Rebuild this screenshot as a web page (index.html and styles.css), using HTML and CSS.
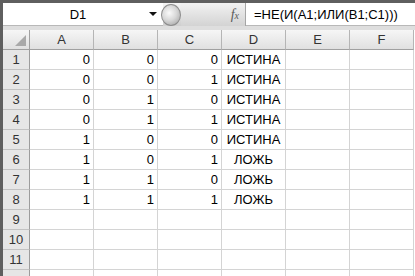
FILE: index.html
```html
<!DOCTYPE html>
<html>
<head>
    <title>Excel - НЕ(И(ИЛИ))</title>
    <link rel="stylesheet" href="styles.css">
</head>
<body>
    <div class="main">
        <div class="formula-bar">
            <div class="name-box">
                <span class="name">D1</span>
                <span class="drop"></span>
            </div>
            <div class="splitter"><span class="knob"></span></div>
            <div class="fx-area"><span class="fx"><i>f</i><small>x</small></span></div>
            <div class="formula">=НЕ(И(А1;ИЛИ(В1;С1)))</div>
        </div>

        <div class="sheet">
            <div class="corner"><span class="tri"></span></div>
            <div class="col-head">A</div>
            <div class="col-head">B</div>
            <div class="col-head">C</div>
            <div class="col-head">D</div>
            <div class="col-head">E</div>
            <div class="col-head">F</div>

            <div class="row-head">1</div><div class="cell num">0</div><div class="cell num">0</div><div class="cell num">0</div><div class="cell bool">ИСТИНА</div><div class="cell"></div><div class="cell"></div>
            <div class="row-head">2</div><div class="cell num">0</div><div class="cell num">0</div><div class="cell num">1</div><div class="cell bool">ИСТИНА</div><div class="cell"></div><div class="cell"></div>
            <div class="row-head">3</div><div class="cell num">0</div><div class="cell num">1</div><div class="cell num">0</div><div class="cell bool">ИСТИНА</div><div class="cell"></div><div class="cell"></div>
            <div class="row-head">4</div><div class="cell num">0</div><div class="cell num">1</div><div class="cell num">1</div><div class="cell bool">ИСТИНА</div><div class="cell"></div><div class="cell"></div>
            <div class="row-head">5</div><div class="cell num">1</div><div class="cell num">0</div><div class="cell num">0</div><div class="cell bool">ИСТИНА</div><div class="cell"></div><div class="cell"></div>
            <div class="row-head">6</div><div class="cell num">1</div><div class="cell num">0</div><div class="cell num">1</div><div class="cell bool">ЛОЖЬ</div><div class="cell"></div><div class="cell"></div>
            <div class="row-head">7</div><div class="cell num">1</div><div class="cell num">1</div><div class="cell num">0</div><div class="cell bool">ЛОЖЬ</div><div class="cell"></div><div class="cell"></div>
            <div class="row-head">8</div><div class="cell num">1</div><div class="cell num">1</div><div class="cell num">1</div><div class="cell bool">ЛОЖЬ</div><div class="cell"></div><div class="cell"></div>
            <div class="row-head">9</div><div class="cell"></div><div class="cell"></div><div class="cell"></div><div class="cell"></div><div class="cell"></div><div class="cell"></div>
            <div class="row-head">10</div><div class="cell"></div><div class="cell"></div><div class="cell"></div><div class="cell"></div><div class="cell"></div><div class="cell"></div>
            <div class="row-head">11</div><div class="cell"></div><div class="cell"></div><div class="cell"></div><div class="cell"></div><div class="cell"></div><div class="cell"></div>
            <div class="row-head"></div><div class="cell"></div><div class="cell"></div><div class="cell"></div><div class="cell"></div><div class="cell"></div><div class="cell"></div>
        </div>
    </div>
</body>
</html>
```

FILE: styles.css
```css
body {
    margin: 0;
    padding: 0;
    background-color: #5f5f5f;
    font-family: "Liberation Sans", Arial, sans-serif;
    font-size: 12px;
    color: #000;
    overflow: hidden;
}

.main {
    margin: 3px 0 0 3px;
    background-color: #dedede;
    height: 273px;
    overflow: hidden;
}

/* formula bar */
.formula-bar {
    display: flex;
    height: 23px;
    margin-bottom: 4px;
}

.name-box {
    width: 160px;
    display: flex;
    align-items: center;
    background-color: #fff;
    border-bottom: 1px solid #b8b8b8;
    box-sizing: border-box;
}

.name {
    flex: 1;
    text-align: center;
    font-size: 13px;
    padding-left: 4px;
}

.drop {
    width: 0;
    height: 0;
    border-left: 4px solid transparent;
    border-right: 4px solid transparent;
    border-top: 4px solid #111;
    margin-right: 6px;
}

.splitter {
    width: 18px;
    background: linear-gradient(#f4f4f4, #cfcfcf);
    display: flex;
    align-items: center;
}

.knob {
    width: 20px;
    height: 22px;
    margin-left: -2px;
    border-radius: 50%;
    background: radial-gradient(circle at 40% 40%, #fafafa 0, #d8d8d8 45%, #9a9a9a 100%);
    border: 1px solid #8c8c8c;
    box-sizing: border-box;
}

.fx-area {
    width: 65px;
    display: flex;
    align-items: center;
    justify-content: flex-end;
    padding-right: 6px;
    box-sizing: border-box;
    background: linear-gradient(#f2f2f2, #d3d3d3);
    border-right: 1px solid #a5a5a5;
}

.fx {
    font-family: "Liberation Serif", serif;
    color: #5a5a5a;
    font-size: 14px;
}

.fx small {
    font-size: 10px;
    font-style: italic;
}

.formula {
    flex: 1;
    background-color: #fff;
    border-bottom: 1px solid #b8b8b8;
    font-size: 13px;
    line-height: 23px;
    padding-left: 8px;
    white-space: nowrap;
}

/* sheet grid */
.sheet {
    display: grid;
    grid-template-columns: 27px repeat(6, 64px);
    grid-template-rows: 20px;
    grid-auto-rows: 20px;
    background-color: #fff;
}

.corner,
.col-head,
.row-head {
    background: linear-gradient(#f6f6f6, #e0e0e0);
    box-sizing: border-box;
    border-right: 1px solid #b5b5b5;
    border-bottom: 1px solid #a0a0a0;
    color: #333;
    font-size: 13px;
    display: flex;
    align-items: center;
    justify-content: center;
}

.corner {
    position: relative;
    border-right-color: #a0a0a0;
}

.tri {
    position: absolute;
    right: 3px;
    bottom: 3px;
    width: 0;
    height: 0;
    border-left: 11px solid transparent;
    border-bottom: 11px solid #a9a9a9;
}

.row-head {
    background: #e6e6e6;
    border-right: 1px solid #9c9c9c;
    border-bottom: 1px solid #c2c2c2;
}

.cell {
    box-sizing: border-box;
    border-right: 1px solid #d4d4d4;
    border-bottom: 1px solid #d4d4d4;
    font-size: 13px;
    line-height: 19px;
    white-space: nowrap;
}

.num {
    text-align: right;
    padding-right: 3px;
}

.bool {
    text-align: center;
}
```
